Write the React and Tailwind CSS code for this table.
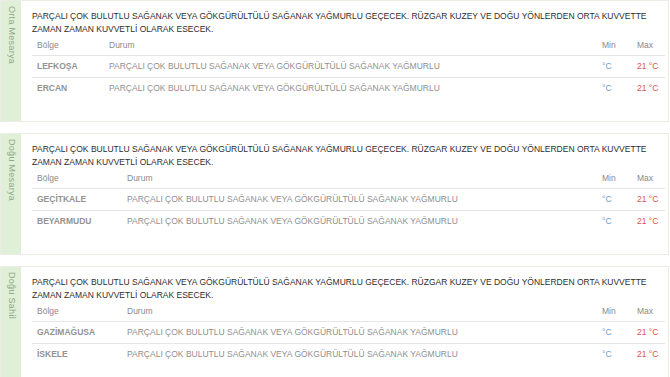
import React from 'react';

const regions = [
  {
    name: 'Orta Mesarya',
    bolgeWidth: 'w-[72px]',
    rows: ['LEFKOŞA', 'ERCAN'],
  },
  {
    name: 'Doğu Mesarya',
    bolgeWidth: 'w-[90px]',
    rows: ['GEÇİTKALE', 'BEYARMUDU'],
  },
  {
    name: 'Doğu Sahil',
    bolgeWidth: 'w-[90px]',
    rows: ['GAZİMAĞUSA', 'İSKELE'],
  },
];

const summary =
  'PARÇALI ÇOK BULUTLU SAĞANAK VEYA GÖKGÜRÜLTÜLÜ SAĞANAK YAĞMURLU GEÇECEK. RÜZGAR KUZEY VE DOĞU YÖNLERDEN ORTA KUVVETTE ZAMAN ZAMAN KUVVETLİ OLARAK ESECEK.';
const durum = 'PARÇALI ÇOK BULUTLU SAĞANAK VEYA GÖKGÜRÜLTÜLÜ SAĞANAK YAĞMURLU';

const RegionPanel = ({ region }) => (
  <div className="flex h-[122px] shrink-0 border border-[#ecebe4] bg-white">
    <div className="w-[20px] shrink-0 bg-[#e0f0d8] flex justify-center pt-[5px]">
      <span className="[writing-mode:vertical-rl] text-[9px] leading-none text-[#8fa887] tracking-[0.3px]">
        {region.name}
      </span>
    </div>
    <div className="flex-1 pl-[11px] pr-[3px] pt-[9px]">
      <p className="text-[8.5px] leading-[13px] text-[#2e2e2e] pr-[10px]">{summary}</p>
      <table className="w-full border-collapse table-fixed text-[8.5px] text-[#8a8a8a]">
        <thead>
          <tr className="h-[19px] border-b border-[#e6e6e6]">
            <th className={`${region.bolgeWidth} text-left font-normal pl-[5px]`}>Bölge</th>
            <th className="text-left font-normal pl-[5px]">Durum</th>
            <th className="w-[35px] text-left font-normal pl-[5px]">Min</th>
            <th className="w-[33px] text-left font-normal pl-[5px]">Max</th>
          </tr>
        </thead>
        <tbody>
          {region.rows.map((name, i) => (
            <tr key={name} className={`h-[22px] ${i === 0 ? 'border-b border-[#e6e6e6]' : ''}`}>
              <td className="pl-[5px] font-semibold text-[#939393] whitespace-nowrap">{name}</td>
              <td className="pl-[5px] text-[#8f8f8f] whitespace-nowrap">{durum}</td>
              <td className="pl-[5px] text-[#6a9ccc] whitespace-nowrap">°C</td>
              <td className="pl-[5px] text-[#d9534f] whitespace-nowrap">21 °C</td>
            </tr>
          ))}
        </tbody>
      </table>
    </div>
  </div>
);

export default function App() {
  return (
    <div className="w-[670px] h-[377px] overflow-hidden bg-white font-['Liberation_Sans',Arial,sans-serif] flex flex-col gap-[11px] pr-[1px]">
      {regions.map(r => (
        <RegionPanel key={r.name} region={r} />
      ))}
    </div>
  );
}
